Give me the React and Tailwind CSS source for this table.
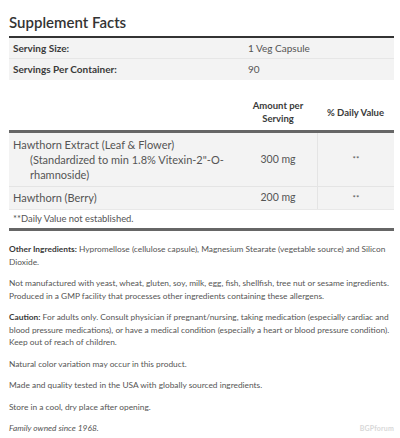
const Row = ({ label, value, className = "" }) => (
    <div className={`flex h-[21px] items-center bg-[#f3f3f3] ${className}`}>
        <div className="w-[235px] pl-[4px] font-bold text-[#3a3a3a]">{label}</div>
        <div className="pl-[4px] text-[#555]">{value}</div>
    </div>
)

const App = () => {
    return (
        <div className="w-[400px] h-[438px] bg-white px-[9px] pt-[11px] text-[10px] text-[#555] overflow-hidden relative" style={{ fontFamily: "Lato, 'Open Sans', sans-serif" }}>
            <h2 className="text-[15px] leading-[22px] font-semibold text-[#333]">Supplement Facts</h2>
            <div className="mt-[3px] w-[385px] border-t-[2px] border-[#333]">
                <Row label="Serving Size:" value="1 Veg Capsule" className="border-b border-[#e6e6e6]" />
                <Row label="Servings Per Container:" value="90" />
            </div>

            <div className="mt-[19px] w-[385px]">
                <div className="flex items-end pb-[5px] font-bold text-[#3a3a3a] text-[9.5px] leading-[13px]">
                    <div className="w-[230px]"></div>
                    <div className="w-[78px] text-center">Amount per<br />Serving</div>
                    <div className="w-[77px] text-center pb-[6px]">% Daily Value</div>
                </div>
                <div className="border-t-[3px] border-[#666]">
                    <div className="flex bg-[#f3f3f3] border-b border-[#e4e4e4] h-[54px] leading-[15px]">
                        <div className="w-[230px] pl-[4px] pt-[4px] text-[11px] text-[#555]">
                            Hawthorn Extract (Leaf &amp; Flower)
                            <div className="pl-[17px]">(Standardized to min 1.8% Vitexin-2"-O-rhamnoside)</div>
                        </div>
                        <div className="w-[78px] flex items-center justify-center text-[10.5px]">300 mg</div>
                        <div className="w-[77px] flex items-center justify-center border-l border-[#e4e4e4] text-[8px]">**</div>
                    </div>
                    <div className="flex bg-[#f3f3f3] h-[22px] items-center">
                        <div className="w-[230px] pl-[4px] text-[11px]">Hawthorn (Berry)</div>
                        <div className="w-[78px] text-center text-[10.5px]">200 mg</div>
                        <div className="w-[77px] h-full flex items-center justify-center border-l border-[#e4e4e4] text-[8px]">**</div>
                    </div>
                    <div className="h-[22px] flex items-center pl-[4px] text-[9.4px] border-t border-[#e8e8e8] border-b-[3px] border-b-[#666]">**Daily Value not established.</div>
                </div>
            </div>

            <div className="mt-[12px] w-[384px] text-[8.35px] leading-[12.5px] text-[#555]">
                <p><b className="text-[#3a3a3a]">Other Ingredients:</b> Hypromellose (cellulose capsule), Magnesium Stearate (vegetable source) and Silicon Dioxide.</p>
                <p className="mt-[9px]">Not manufactured with yeast, wheat, gluten, soy, milk, egg, fish, shellfish, tree nut or sesame ingredients. Produced in a GMP facility that processes other ingredients containing these allergens.</p>
                <p className="mt-[9px]"><b className="text-[#3a3a3a]">Caution:</b> For adults only. Consult physician if pregnant/nursing, taking medication (especially cardiac and blood pressure medications), or have a medical condition (especially a heart or blood pressure condition). Keep out of reach of children.</p>
                <p className="mt-[9px]">Natural color variation may occur in this product.</p>
                <p className="mt-[9px]">Made and quality tested in the USA with globally sourced ingredients.</p>
                <p className="mt-[9px]">Store in a cool, dry place after opening.</p>
                <p className="mt-[9px] italic">Family owned since 1968.</p>
            </div>
            <div className="absolute right-[6px] bottom-[5px] text-[7px] font-bold tracking-wide text-[#d8d8d8]">BGPforum</div>
        </div>
    )
}

export default App
